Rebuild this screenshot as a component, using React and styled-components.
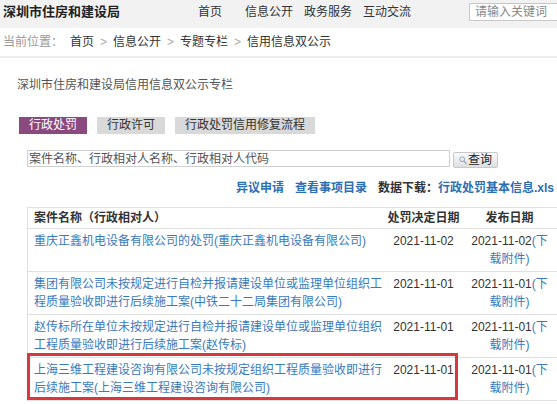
import React from "react";
import styled, { createGlobalStyle } from "styled-components";

const Global = createGlobalStyle`
  html, body { margin: 0; padding: 0; overflow: hidden; background: #fff; }
  body { font-family: "Liberation Sans", "Noto Sans CJK SC", sans-serif; font-size: 12px; color: #333; }
`;

const Page = styled.div`
  width: 580px;
  height: 404px;
  overflow: hidden;
`;

const TopBar = styled.div`
  display: flex;
  align-items: center;
  height: 28px;
  padding-left: 3px;
  background: #f2f2f2;
`;

const Logo = styled.div`
  width: 195px;
  flex-shrink: 0;
  font-size: 13px;
  font-weight: bold;
  color: #222;
  line-height: 18px;
  margin-top: -4px;
`;

const Nav = styled.nav`
  display: flex;
  gap: 11px;
  margin-top: -4px;
`;

const NavItem = styled.a`
  color: #333;
  font-size: 12px;
  line-height: 18px;
  text-decoration: none;
  &:first-child { margin-right: 12px; }
`;

const TopSearch = styled.input`
  margin-left: auto;
  flex-shrink: 0;
  width: 100px;
  height: 16px;
  box-sizing: content-box;
  border: 1px solid #c8c8c8;
  border-right: none;
  padding: 0 5px;
  margin-top: -4px;
  font: 12px "Liberation Sans", "Noto Sans CJK SC", sans-serif;
  background: #fff;
  &::placeholder { color: #888; }
`;

const Crumbs = styled.div`
  display: flex;
  align-items: center;
  height: 27px;
  padding: 0 0 1px 3px;
  border-bottom: 2px solid #ededed;
  line-height: 18px;
`;

const CrumbLabel = styled.span`
  color: #999;
  margin-right: 7px;
`;

const Crumb = styled.a`
  color: #333;
  text-decoration: none;
`;

const Sep = styled.span`
  color: #aaa;
  margin: 0 6px;
`;

const Panel = styled.div`
  padding-left: 17px;
`;

const PanelTitle = styled.div`
  margin-top: 18px;
  line-height: 18px;
  color: #555;
`;

const Tabs = styled.div`
  display: flex;
  gap: 10px;
  margin: 23px 0 0 2px;
`;

const Tab = styled.div`
  height: 17px;
  line-height: 17px;
  padding: 0 10px;
  background: ${(p) => (p.$active ? "#8a4a80" : "#d9d9d9")};
  color: ${(p) => (p.$active ? "#fff" : "#333")};
`;

const SearchRow = styled.div`
  display: flex;
  align-items: flex-start;
  gap: 3px;
  margin: 16px 0 0 10px;
`;

const SearchInput = styled.input`
  width: 420px;
  height: 15px;
  box-sizing: content-box;
  border: 1px solid #cfcfcf;
  padding: 0 0 0 1px;
  font: 12px "Liberation Sans", "Noto Sans CJK SC", sans-serif;
  &::placeholder { color: #555; }
`;

const SearchButton = styled.button`
  display: flex;
  align-items: center;
  justify-content: center;
  gap: 1px;
  margin-top: 2px;
  width: 45px;
  height: 16px;
  padding: 0;
  border: 1px solid #c9c9c9;
  border-radius: 2px;
  background: linear-gradient(#fbfbfb, #dedede);
  font: 12px "Liberation Sans", "Noto Sans CJK SC", sans-serif;
  color: #222;
  line-height: 14px;
`;

const LinksRow = styled.div`
  display: flex;
  justify-content: flex-end;
  gap: 11px;
  margin-top: 11px;
  padding-right: 26px;
  line-height: 18px;
  font-weight: bold;
`;

const BoldLink = styled.a`
  color: #2c6eb4;
  text-decoration: none;
`;

const Label = styled.span`
  color: #333;
`;

const TableWrap = styled.div`
  position: relative;
  margin: 10px 0 0 10px;
`;

const Table = styled.table`
  border-collapse: collapse;
  width: 560px;
  table-layout: fixed;
  border-left: 1px solid #e0e0e0;
  border-top: 1px solid #e0e0e0;
`;

const Th = styled.th`
  padding: 1px ${(p) => p.$pr || "6px"} 1px ${(p) => p.$pl || "6px"};
  line-height: 18px;
  font-weight: bold;
  color: #333;
  white-space: nowrap;
  text-align: ${(p) => p.$align || "center"};
  border-bottom: 1px solid #e0e0e0;
`;

const Td = styled.td`
  padding: 3px ${(p) => p.$pr || "6px"} 3px ${(p) => p.$pl || "6px"};
  line-height: 18px;
  vertical-align: top;
  text-align: ${(p) => p.$align || "center"};
  border-bottom: 1px solid #e0e0e0;
  color: #333;
`;

const TableLink = styled.a`
  color: #3a79bd;
  text-decoration: none;
`;

const Highlight = styled.div`
  position: absolute;
  left: 0;
  top: 146px;
  width: 425px;
  height: 41px;
  border: 3px solid #d8383b;
  pointer-events: none;
`;

const rows = [
  {
    name: "重庆正鑫机电设备有限公司的处罚(重庆正鑫机电设备有限公司)",
    decide: "2021-11-02",
    publish: "2021-11-02",
  },
  {
    name: "集团有限公司未按规定进行自检并报请建设单位或监理单位组织工程质量验收即进行后续施工案(中铁二十二局集团有限公司)",
    decide: "2021-11-01",
    publish: "2021-11-01",
  },
  {
    name: "赵传标所在单位未按规定进行自检并报请建设单位或监理单位组织工程质量验收即进行后续施工案(赵传标)",
    decide: "2021-11-01",
    publish: "2021-11-01",
  },
  {
    name: "上海三维工程建设咨询有限公司未按规定组织工程质量验收即进行后续施工案(上海三维工程建设咨询有限公司)",
    decide: "2021-11-01",
    publish: "2021-11-01",
  },
];

const SearchIcon = () => (
  <svg width="8" height="9" viewBox="0 0 8 9">
    <circle cx="3.2" cy="3.2" r="2.4" fill="none" stroke="#8aa9c6" strokeWidth="1" />
    <line x1="5" y1="5" x2="7.3" y2="7.8" stroke="#8aa9c6" strokeWidth="1.2" />
  </svg>
);

export default function App() {
  return (
    <Page>
      <Global />
      <TopBar>
        <Logo>深圳市住房和建设局</Logo>
        <Nav>
          <NavItem>首页</NavItem>
          <NavItem>信息公开</NavItem>
          <NavItem>政务服务</NavItem>
          <NavItem>互动交流</NavItem>
        </Nav>
        <TopSearch placeholder="请输入关键词" />
      </TopBar>
      <Crumbs>
        <CrumbLabel>当前位置：</CrumbLabel>
        <Crumb>首页</Crumb>
        <Sep>&gt;</Sep>
        <Crumb>信息公开</Crumb>
        <Sep>&gt;</Sep>
        <Crumb>专题专栏</Crumb>
        <Sep>&gt;</Sep>
        <Crumb>信用信息双公示</Crumb>
      </Crumbs>
      <Panel>
        <PanelTitle>深圳市住房和建设局信用信息双公示专栏</PanelTitle>
        <Tabs>
          <Tab $active>行政处罚</Tab>
          <Tab>行政许可</Tab>
          <Tab>行政处罚信用修复流程</Tab>
        </Tabs>
        <SearchRow>
          <SearchInput placeholder="案件名称、行政相对人名称、行政相对人代码" />
          <SearchButton>
            <SearchIcon />
            查询
          </SearchButton>
        </SearchRow>
      </Panel>
      <LinksRow>
        <BoldLink>异议申请</BoldLink>
        <BoldLink>查看事项目录</BoldLink>
        <span>
          <Label>数据下载：</Label>
          <BoldLink>行政处罚基本信息.xls</BoldLink>
        </span>
      </LinksRow>
      <Panel>
        <TableWrap>
          <Table>
            <colgroup>
              <col style={{ width: 356 }} />
              <col style={{ width: 80 }} />
              <col style={{ width: 92 }} />
              <col />
            </colgroup>
            <thead>
              <tr>
                <Th $align="left" $pr="1px">案件名称（行政相对人）</Th>
                <Th $pl="2px" $pr="2px">处罚决定日期</Th>
                <Th>发布日期</Th>
                <Th />
              </tr>
            </thead>
            <tbody>
              {rows.map((r, i) => (
                <tr key={i}>
                  <Td $align="left" $pr="1px">
                    <TableLink>{r.name}</TableLink>
                  </Td>
                  <Td $pl="2px" $pr="2px">{r.decide}</Td>
                  <Td>
                    {r.publish}
                    <TableLink>(下载附件)</TableLink>
                  </Td>
                  <Td />
                </tr>
              ))}
            </tbody>
          </Table>
          <Highlight />
        </TableWrap>
      </Panel>
    </Page>
  );
}
